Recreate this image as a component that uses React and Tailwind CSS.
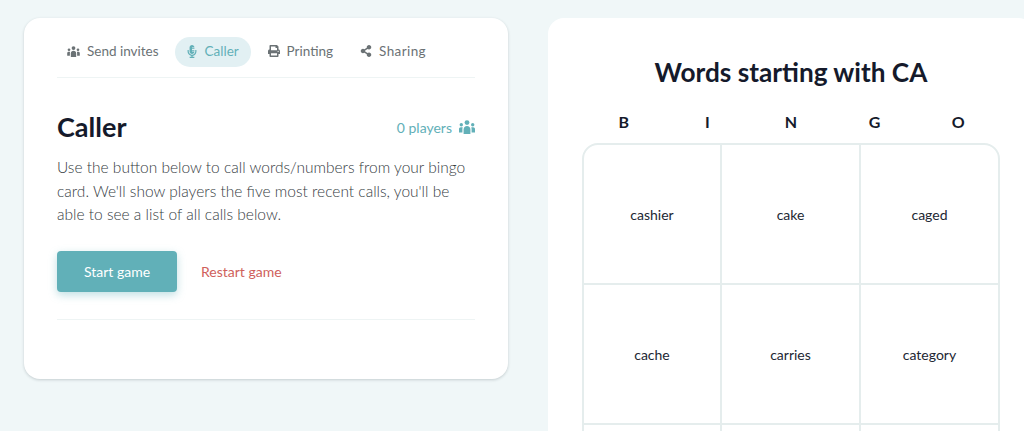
import React from 'react';
import { FaMicrophoneAlt, FaPrint, FaShareAlt } from 'react-icons/fa';

// three people, middle one taller - no package icon has this shape
const PeopleIcon = ({ width, height }) => (
  <svg width={width} height={height} viewBox="0 0 16 14" fill="currentColor">
    <circle cx="8" cy="2.6" r="2.4" />
    <circle cx="2.3" cy="4.8" r="1.7" />
    <circle cx="13.7" cy="4.8" r="1.7" />
    <path d="M4.6 14V9.4C4.6 7.3 6 6 8 6s3.4 1.300 3.400 3.400V14z" />
    <path d="M0 12.500V9c0-1 .8-1.800 1.800-1.800h1.900c-.2.600-.3 1.300-.3 2v3.300z" />
    <path d="M16 12.500V9c0-1-.8-1.800-1.800-1.800h-1.900c.2.600.3 1.300.3 2v3.300z" />
  </svg>
);

const tabs = [
  { label: 'Send invites', icon: () => <PeopleIcon width={13} height={11} /> },
  { label: 'Caller', icon: () => <FaMicrophoneAlt className="h-[13px] w-[10px]" />, active: true },
  { label: 'Printing', icon: () => <FaPrint size={12} /> },
  { label: 'Sharing', icon: () => <FaShareAlt size={12} />, wide: true },
];

const letters = ['B', 'I', 'N', 'G', 'O'];
const words = ['cashier', 'cake', 'caged', 'cache', 'carries', 'category', '', '', ''];

const App = () => {
  return (
    <div className="h-screen overflow-hidden bg-[#f0f7f8] font-['Lato',sans-serif]">
      <div className="flex w-[1100px] items-start gap-[40px] pl-[24px] pt-[18px]">
        <div className="w-[484px] h-[361px] shrink-0 rounded-[16px] bg-white px-[33px] pt-[19px] shadow-[0_1px_3px_rgba(40,60,70,0.22)]">
          <div className="flex items-center gap-[6px] border-b border-[#eef4f4] pb-[10px]">
            {tabs.map(({ label, icon: Icon, active, wide }) => (
              <div
                key={label}
                className={
                  active
                    ? 'mr-[1px] flex h-[30px] w-[76px] items-center gap-[8px] rounded-full bg-[#e2f0f3] pb-[2px] pl-[12px] text-[13.5px] text-[#62b0b8]'
                    : wide
                      ? 'ml-[1px] flex h-[30px] items-center gap-[7px] px-[10px] pb-[2px] text-[13.5px] text-[#6b7275]'
                      : 'flex h-[30px] items-center gap-[7px] px-[10px] pb-[2px] text-[13.5px] text-[#6b7275]'
                }
              >
                <Icon />
                <span className={wide ? 'tracking-[0.4px]' : ''}>{label}</span>
              </div>
            ))}
          </div>

          <div className="mt-[32px] flex items-center justify-between">
            <h2 className="text-[27px] font-bold leading-[34px] text-[#151a2b]">Caller</h2>
            <div className="flex items-center gap-[7px] text-[14px] text-[#62b0b8]">
              <span>0 players</span>
              <PeopleIcon width={16} height={14} />
            </div>
          </div>

          <p className="mt-[12px] text-[15.5px] font-light leading-[23.5px] text-[#363c3f]">
            Use the button below to call words/numbers from your bingo card. We'll show players the five most recent calls, you'll be able to see a list of all calls below.
          </p>

          <div className="mt-[24px] flex items-center gap-[24px]">
            <button className="h-[41px] w-[120px] rounded-[4px] bg-[#61b0b8] text-[14px] text-white shadow-[0_3px_8px_rgba(97,176,184,0.4)]">
              Start game
            </button>
            <span className="text-[14px] text-[#cf5f5c]">Restart game</span>
          </div>

          <div className="mt-[27px] border-t border-[#eef4f4]" />
        </div>

        <div className="w-[486px] h-[600px] shrink-0 rounded-[16px] bg-white px-[34px] pt-[36px]">
          <h1 className="text-center text-[26.2px] font-bold leading-[36px] text-[#151a2b]">Words starting with CA</h1>
          <div className="mt-[20px] grid grid-cols-5 text-center text-[16px] font-bold leading-[24px] text-[#151a2b]">
            {letters.map((l) => (
              <div key={l}>{l}</div>
            ))}
          </div>
          <div className="mt-[9px] grid grid-cols-[138px_139px_137px] overflow-hidden rounded-[16px] border-2 border-[#e5eded]">
            {words.map((w, i) => (
              <div
                key={i}
                className={
                  (i % 3 !== 2 ? 'border-r-2 ' : '') +
                  'flex h-[140px] items-center justify-center border-b-2 border-[#e5eded] text-[14px] text-[#222733]'
                }
              >
                {w}
              </div>
            ))}
          </div>
        </div>
      </div>
    </div>
  );
};

export default App;
